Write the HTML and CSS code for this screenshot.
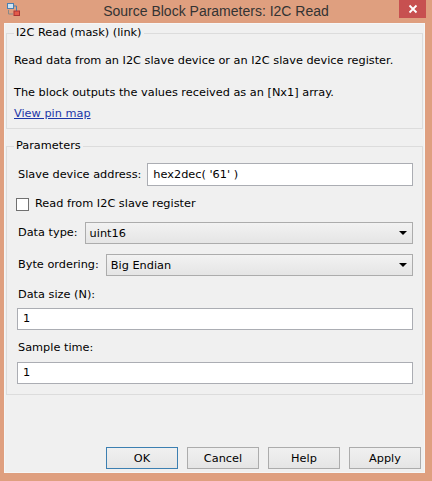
FILE: index.html
```html
<!DOCTYPE html>
<html>
<head>
<meta charset="utf-8">
<link rel="stylesheet" href="styles.css">
</head>
<body>
<div class="window">
  <div class="titlebar">
    <div class="tb-left">
      <svg class="app-icon" width="13" height="13" viewBox="0 0 13 13">
        <rect x="0.5" y="0.5" width="6" height="5" fill="#cfe3f3" stroke="#4a7fb0"/>
        <path d="M6.5 3 H9.5 V8" fill="none" stroke="#4a7fb0" stroke-width="1"/>
        <rect x="7" y="8" width="5.5" height="4.5" fill="#e35a4a" stroke="#a33"/>
        <path d="M1.5 7 V11 H6" fill="none" stroke="#888" stroke-width="1"/>
      </svg>
    </div>
    <div class="title">Source Block Parameters: I2C Read</div>
    <div class="tb-right">
      <div class="close">
        <svg width="10" height="10" viewBox="0 0 10 10"><path d="M1.5 1.5 L8.5 8.5 M8.5 1.5 L1.5 8.5" stroke="#fff" stroke-width="1.8"/></svg>
      </div>
    </div>
  </div>
  <div class="client">
    <fieldset class="group desc">
      <legend>I2C Read (mask) (link)</legend>
      <p class="para">Read data from an I2C slave device or an I2C slave device register.<br><br>The block outputs the values received as an [Nx1] array.</p>
      <a class="link" href="#">View pin map</a>
    </fieldset>
    <fieldset class="group params">
      <legend>Parameters</legend>
      <div class="row r1">
        <span class="lbl">Slave device address:</span>
        <div class="edit grow">hex2dec( '61' )</div>
      </div>
      <div class="row chk-row">
        <span class="checkbox"></span>
        <span class="lbl">Read from I2C slave register</span>
      </div>
      <div class="row r3">
        <span class="lbl">Data type:</span>
        <div class="combo grow"><span>uint16</span><span class="arrow"></span></div>
      </div>
      <div class="row r4">
        <span class="lbl">Byte ordering:</span>
        <div class="combo grow"><span>Big Endian</span><span class="arrow"></span></div>
      </div>
      <div class="lbl stacked s1">Data size (N):</div>
      <div class="edit full e1">1</div>
      <div class="lbl stacked s2">Sample time:</div>
      <div class="edit full e2">1</div>
    </fieldset>
    <div class="spacer"></div>
    <div class="buttons">
      <button class="btn default">OK</button>
      <button class="btn">Cancel</button>
      <button class="btn">Help</button>
      <button class="btn">Apply</button>
    </div>
  </div>
</div>
</body>
</html>
```

FILE: styles.css
```css
* { box-sizing: border-box; }
html, body { margin: 0; padding: 0; }
body {
  background: #df9f7f;
  font-family: "DejaVu Sans", Verdana, sans-serif;
  font-size: 11.3px;
  color: #000;
}
.window {
  width: 432px;
  height: 481px;
  display: flex;
  flex-direction: column;
  background: #df9f7f;
}
.titlebar {
  height: 23px;
  display: grid;
  grid-template-columns: 1fr auto 1fr;
  align-items: start;
  font-family: "Liberation Sans", Arial, sans-serif;
}
.tb-left { padding: 3px 0 0 7px; }
.app-icon { display: block; }
.title {
  font-size: 14px;
  line-height: 23px;
  color: #333;
}
.tb-right { display: flex; justify-content: flex-end; padding-right: 6px; }
.close {
  width: 27px;
  height: 18px;
  background: #c75050;
  display: flex;
  align-items: center;
  justify-content: center;
}
.close svg { display: block; }
.client {
  flex: 1;
  margin: 0 7px 8px 4px;
  background: #f0f0f0;
  border: 1px solid #f6f6f6;
  display: flex;
  flex-direction: column;
  padding: 0 1px;
}
.group {
  margin: 0;
  border: 1px solid #dcdcdc;
  min-width: 0;
}
.group legend {
  line-height: 14px;
  padding: 0 2px;
}
.desc {
  margin-top: 2px;
  padding: 13px 9px 6px 7px;
}
.para {
  margin: 0;
  line-height: 16px;
}
.link {
  display: block;
  margin-top: 5px;
  line-height: 16px;
  color: #1c36a8;
  text-decoration: underline;
  width: max-content;
}
.params {
  margin-top: 10px;
  padding: 10px 9px 10px 10px;
}
.params legend { margin-left: -3px; }
.row {
  display: flex;
  align-items: center;
  gap: 9px;
}
.grow { flex: 1; min-width: 0; }
.lbl { line-height: 16px; white-space: nowrap; }
.r1 { gap: 6px; }
.r1 .lbl { padding-left: 1px; }
.edit {
  background: #fff;
  border: 1px solid #abadb3;
  height: 22px;
  line-height: 20px;
  padding: 0 5px;
}
.r1 .edit { height: 23px; line-height: 21px; }
.chk-row {
  margin-top: 10px;
  gap: 6px;
  margin-left: -1px;
}
.checkbox {
  width: 13px;
  height: 13px;
  background: #fff;
  border: 1px solid #707070;
}
.r3 { margin-top: 10px; gap: 7px; padding-left: 1px; }
.r4 { margin-top: 10px; gap: 7px; padding-left: 1px; }
.combo {
  height: 22px;
  border: 1px solid #acacac;
  background: linear-gradient(#f2f2f2, #e5e5e5);
  display: flex;
  align-items: center;
  justify-content: space-between;
  padding: 0 5px 0 4px;
}
.arrow {
  width: 0;
  height: 0;
  border-left: 4px solid transparent;
  border-right: 4px solid transparent;
  border-top: 4px solid #000;
}
.stacked { padding-left: 1px; }
.s1 { margin-top: 11px; }
.e1 { margin-top: 5px; }
.s2 { margin-top: 10px; }
.e2 { margin-top: 6px; }
.full { width: 100%; }
.spacer { flex: 1; }
.buttons {
  display: flex;
  justify-content: flex-end;
  gap: 9px;
  padding: 0 2px 3px 0;
}
.btn {
  width: 72px;
  height: 22px;
  font-family: "DejaVu Sans", Verdana, sans-serif;
  font-size: 11.3px;
  color: #000;
  border: 1px solid #acacac;
  background: linear-gradient(#f0f0f0, #e5e5e5);
  padding: 0;
}
.btn.default { border-color: #3c7fb1; }
```
